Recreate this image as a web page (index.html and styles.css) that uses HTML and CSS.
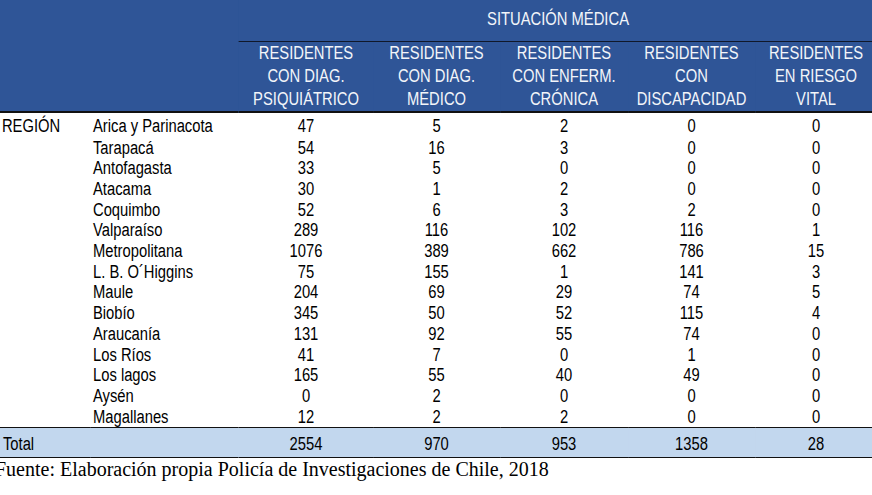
FILE: index.html
```html
<!DOCTYPE html>
<html lang="es">
<head>
<meta charset="utf-8">
<title>Situación médica</title>
<link rel="stylesheet" href="styles.css">
</head>
<body>
<div class="wrap">
<table class="tbl">
  <colgroup>
    <col class="c-reg"><col class="c-name"><col class="c1"><col class="c2"><col class="c3"><col class="c4"><col class="c5">
  </colgroup>
  <thead>
    <tr class="h1">
      <th colspan="2" rowspan="2" class="blank"></th>
      <th colspan="5" class="group">SITUACIÓN MÉDICA</th>
    </tr>
    <tr class="h2">
      <th>RESIDENTES<br>CON DIAG.<br>PSIQUIÁTRICO</th>
      <th>RESIDENTES<br>CON DIAG.<br>MÉDICO</th>
      <th>RESIDENTES<br>CON ENFERM.<br>CRÓNICA</th>
      <th>RESIDENTES<br>CON<br>DISCAPACIDAD</th>
      <th>RESIDENTES<br>EN RIESGO<br>VITAL</th>
    </tr>
  </thead>
  <tbody>
    <tr class="first"><td class="reg">REGIÓN</td><td class="name">Arica y Parinacota</td><td>47</td><td>5</td><td>2</td><td>0</td><td>0</td></tr>
    <tr><td></td><td class="name">Tarapacá</td><td>54</td><td>16</td><td>3</td><td>0</td><td>0</td></tr>
    <tr><td></td><td class="name">Antofagasta</td><td>33</td><td>5</td><td>0</td><td>0</td><td>0</td></tr>
    <tr><td></td><td class="name">Atacama</td><td>30</td><td>1</td><td>2</td><td>0</td><td>0</td></tr>
    <tr><td></td><td class="name">Coquimbo</td><td>52</td><td>6</td><td>3</td><td>2</td><td>0</td></tr>
    <tr><td></td><td class="name">Valparaíso</td><td>289</td><td>116</td><td>102</td><td>116</td><td>1</td></tr>
    <tr><td></td><td class="name">Metropolitana</td><td>1076</td><td>389</td><td>662</td><td>786</td><td>15</td></tr>
    <tr><td></td><td class="name">L. B. O´Higgins</td><td>75</td><td>155</td><td>1</td><td>141</td><td>3</td></tr>
    <tr><td></td><td class="name">Maule</td><td>204</td><td>69</td><td>29</td><td>74</td><td>5</td></tr>
    <tr><td></td><td class="name">Biobío</td><td>345</td><td>50</td><td>52</td><td>115</td><td>4</td></tr>
    <tr><td></td><td class="name">Araucanía</td><td>131</td><td>92</td><td>55</td><td>74</td><td>0</td></tr>
    <tr><td></td><td class="name">Los Ríos</td><td>41</td><td>7</td><td>0</td><td>1</td><td>0</td></tr>
    <tr><td></td><td class="name">Los lagos</td><td>165</td><td>55</td><td>40</td><td>49</td><td>0</td></tr>
    <tr><td></td><td class="name">Aysén</td><td>0</td><td>2</td><td>0</td><td>0</td><td>0</td></tr>
    <tr class="last"><td></td><td class="name">Magallanes</td><td>12</td><td>2</td><td>2</td><td>0</td><td>0</td></tr>
  </tbody>
  <tfoot>
    <tr class="total"><td class="reg">Total</td><td></td><td>2554</td><td>970</td><td>953</td><td>1358</td><td>28</td></tr>
  </tfoot>
</table>
</div>
<p class="source">Fuente: Elaboración propia Policía de Investigaciones de Chile, 2018</p>
</body>
</html>
```
FILE: styles.css
```css
html, body {
  margin: 0;
  padding: 0;
  background: #ffffff;
  overflow: hidden;
}
body {
  width: 872px;
  height: 495px;
}
.wrap {
  width: 872px;
  overflow: hidden;
}
/* Arial Narrow look: Liberation Sans condensed horizontally */
.tbl {
  width: 1069.6px;
  border-collapse: separate;
  border-spacing: 0;
  table-layout: fixed;
  font-family: "Liberation Sans", Arial, sans-serif;
  color: #000;
  transform: scaleX(0.82);
  transform-origin: 0 0;
}
.c-reg { width: 109.8px; }
.c-name { width: 181.7px; }
.c1 { width: 163.4px; }
.c2 { width: 154.9px; }
.c3 { width: 156.1px; }
.c4 { width: 154.9px; }
.c5 { width: 148.8px; }

thead th {
  background: #2f5597;
  box-shadow: 3px 0 0 #2f5597;
  color: #f3f5fa;
  font-weight: normal;
  padding: 0;
  font-size: 18px;
  line-height: 23px;
}
.h1 .group {
  height: 39px;
  padding-bottom: 2px;
  border-bottom: 1px solid #10182a;
  vertical-align: middle;
}
.h2 th {
  height: 69px;
  vertical-align: top;
  border-bottom: 2px solid #111;
}
.blank {
  border-bottom: 2px solid #111;
}

tbody td, tfoot td {
  padding: 0;
  font-size: 18px;
  line-height: 20.7px;
  text-align: center;
  vertical-align: top;
}
tbody tr.first td {
  padding-top: 3px;
  padding-bottom: 0.8px;
}
td.reg { text-align: left; padding-left: 2.4px; }
td.name { text-align: left; padding-left: 3.6px; }
tbody tr.last td { border-bottom: 1px solid #111; }

.total td {
  background: #c2d7ee;
  box-shadow: 3px 0 0 #c2d7ee;
  padding-top: 5.5px;
  padding-bottom: 2.5px;
  border-bottom: 1px solid #111;
}
.total td.reg { padding-left: 3.6px; }

.source {
  margin: 0 0 0 -5px;
  font-family: "Liberation Serif", "Times New Roman", serif;
  font-size: 20px;
  line-height: normal;
  white-space: nowrap;
}
```
